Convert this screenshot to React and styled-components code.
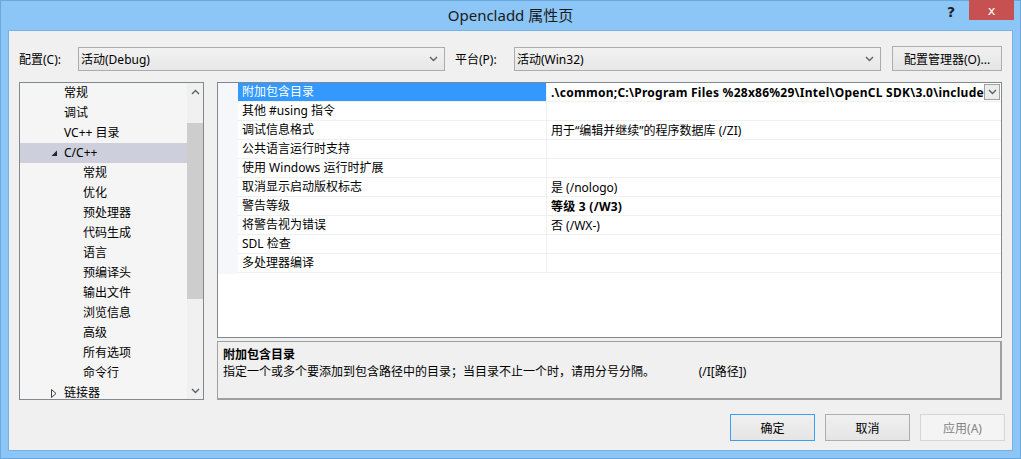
import React from 'react';
import styled, { createGlobalStyle } from 'styled-components';

const GlobalStyle = createGlobalStyle`
  html, body {
    margin: 0;
    padding: 0;
    background: #8bc6f7;
  }
  body {
    font-family: "Noto Sans", "Noto Sans CJK SC", sans-serif;
    font-size: 12px;
    color: #000;
  }
`;

const FONT = `"Noto Sans", "Noto Sans CJK SC", sans-serif`;

const Window = styled.div`
  width: 1021px;
  height: 459px;
  box-sizing: border-box;
  background: #8bc6f7;
  border: 1px solid #6aa7dc;
  display: flex;
  flex-direction: column;
`;

const TitleBar = styled.div`
  height: 29px;
  display: grid;
  grid-template-columns: 1fr auto 1fr;
  align-items: start;
`;

const Title = styled.div`
  grid-column: 2;
  font-size: 15px;
  line-height: 29px;
  color: #1a1a1a;
  font-family: "Noto Sans", "Noto Sans CJK SC", sans-serif;
`;

const Caption = styled.div`
  grid-column: 3;
  justify-self: end;
  display: flex;
  align-items: flex-start;
  margin-right: 6px;
`;

const HelpGlyph = styled.span`
  font-size: 14px;
  font-weight: bold;
  color: #222;
  line-height: 22px;
  margin-right: 14px;
  font-family: "DejaVu Sans", sans-serif;
`;

const CloseButton = styled.div`
  width: 45px;
  height: 20px;
  margin-top: -1px;
  background: #c75050;
  color: #fff;
  display: flex;
  align-items: center;
  justify-content: center;
  font-size: 13px;
  font-family: "DejaVu Sans", sans-serif;
`;

const Client = styled.div`
  flex: 1;
  margin: 0 7px 7px 7px;
  background: #f0f0f0;
  border: 1px solid #79b1e2;
  display: flex;
  flex-direction: column;
  padding: 15px 10px 0 10px;
`;

const ConfigRow = styled.div`
  display: flex;
  align-items: center;
  height: 25px;
`;

const Label = styled.span`
  width: ${(p) => p.width}px;
  font-family: ${FONT};
  white-space: nowrap;
`;

const Combo = styled.div`
  width: ${(p) => p.width}px;
  height: 24px;
  box-sizing: border-box;
  border: 1px solid #acacac;
  background: linear-gradient(#f2f2f2, #e7e7e7);
  display: flex;
  align-items: center;
  padding: 0 6px 0 2px;
  margin-right: ${(p) => p.gap || 0}px;
`;

const ComboText = styled.span`
  flex: 1;
`;

const Chevron = () => (
  <svg width="9" height="6" viewBox="0 0 9 6">
    <path d="M1 1 L4.5 4.5 L8 1" fill="none" stroke="#606060" strokeWidth="1.4" />
  </svg>
);

const PushButton = styled.div`
  width: ${(p) => p.width}px;
  height: ${(p) => p.height || 27}px;
  box-sizing: border-box;
  border: 1px solid ${(p) => (p.isDefault ? '#3c9ef0' : p.disabled ? '#d5d5d5' : '#adadad')};
  background: ${(p) => (p.disabled ? '#f4f4f4' : 'linear-gradient(#f0f0f0, #e5e5e5)')};
  color: ${(p) => (p.disabled ? '#838383' : '#000')};
  display: flex;
  align-items: center;
  justify-content: center;
  font-family: ${FONT};
`;

const Body = styled.div`
  display: flex;
  margin-top: 11px;
  gap: 13px;
`;

const Tree = styled.div`
  width: 185px;
  height: 318px;
  box-sizing: border-box;
  border: 1px solid #828790;
  background: #f5f5f5;
  display: flex;
  overflow: hidden;
`;

const TreeList = styled.div`
  flex: 1;
  display: flex;
  flex-direction: column;
`;

const TreeItem = styled.div`
  height: 20px;
  flex: none;
  display: flex;
  align-items: center;
  padding-left: ${(p) => p.indent}px;
  background: ${(p) => (p.selected ? '#cdcfdc' : 'transparent')};
  font-family: ${FONT};
  line-height: 20px;
  white-space: nowrap;
`;

const Expander = styled.span`
  width: 12px;
  display: inline-flex;
  align-items: center;
  margin-right: 1px;
`;

const ScrollBar = styled.div`
  width: 16px;
  background: #f0f0f0;
  display: flex;
  flex-direction: column;
  align-items: center;
`;

const ScrollArrow = styled.div`
  height: 17px;
  display: flex;
  align-items: center;
  justify-content: center;
`;

const ScrollTrack = styled.div`
  flex: 1;
  width: 16px;
  display: flex;
  flex-direction: column;
`;

const ScrollThumb = styled.div`
  margin-top: 23px;
  height: 176px;
  background: #cdcdcd;
`;

const RightCol = styled.div`
  display: flex;
  flex-direction: column;
  gap: 3px;
`;

const Grid = styled.div`
  width: 785px;
  height: 256px;
  box-sizing: border-box;
  border: 1px solid #828790;
  background: #fff;
  display: flex;
`;

const Gutter = styled.div`
  width: 20px;
  height: 191px;
  background: #f5f7fb;
`;

const Rows = styled.div`
  flex: 1;
  display: flex;
  flex-direction: column;
`;

const Row = styled.div`
  display: flex;
  height: 19px;
  box-sizing: border-box;
  border-bottom: 1px solid #f0f0f0;
`;

const NameCell = styled.div`
  width: 309px;
  box-sizing: border-box;
  border-right: 1px solid #f0f0f0;
  padding-left: 4px;
  line-height: 18px;
  background: ${(p) => (p.selected ? '#3399ff' : 'transparent')};
  color: ${(p) => (p.selected ? '#fff' : '#000')};
  font-family: ${FONT};
  white-space: nowrap;
`;

const ValueCell = styled.div`
  flex: 1;
  display: flex;
  align-items: center;
  padding-left: 4px;
  overflow: hidden;
  font-family: ${FONT};
  font-weight: ${(p) => (p.bold ? 'bold' : 'normal')};
  letter-spacing: ${(p) => (p.bold ? '0.25px' : 'normal')};
  white-space: nowrap;
`;

const ValueText = styled.span`
  flex: 1;
  overflow: hidden;
`;

const DropButton = styled.div`
  width: 16px;
  height: 16px;
  flex: none;
  box-sizing: border-box;
  border: 1px solid #a0a0a0;
  background: #ececec;
  display: flex;
  align-items: center;
  justify-content: center;
  margin-right: 1px;
`;

const Description = styled.div`
  width: 785px;
  height: 59px;
  box-sizing: border-box;
  border: 1px solid #a0a0a0;
  border-width: 1px 2px 2px 1px;
  padding: 4px 5px;
  display: flex;
  flex-direction: column;
  font-family: ${FONT};
`;

const DescTitle = styled.div`
  font-weight: bold;
  line-height: 17px;
`;

const DescText = styled.div`
  line-height: 17px;
  white-space: pre;
`;

const Footer = styled.div`
  display: flex;
  justify-content: flex-end;
  gap: 10px;
  margin-top: 14px;
  margin-right: -3px;
`;

const tree = [
  { label: '常规', indent: 44 },
  { label: '调试', indent: 44 },
  { label: 'VC++ 目录', indent: 44 },
  { label: 'C/C++', indent: 31, expander: 'open', selected: true },
  { label: '常规', indent: 63 },
  { label: '优化', indent: 63 },
  { label: '预处理器', indent: 63 },
  { label: '代码生成', indent: 63 },
  { label: '语言', indent: 63 },
  { label: '预编译头', indent: 63 },
  { label: '输出文件', indent: 63 },
  { label: '浏览信息', indent: 63 },
  { label: '高级', indent: 63 },
  { label: '所有选项', indent: 63 },
  { label: '命令行', indent: 63 },
  { label: '链接器', indent: 31, expander: 'closed' },
];

const props = [
  {
    name: '附加包含目录',
    value: '.\\common;C:\\Program Files %28x86%29\\Intel\\OpenCL SDK\\3.0\\include',
    bold: true,
    selected: true,
  },
  { name: '其他 #using 指令', value: '' },
  { name: '调试信息格式', value: '用于“编辑并继续”的程序数据库 (/ZI)' },
  { name: '公共语言运行时支持', value: '' },
  { name: '使用 Windows 运行时扩展', value: '' },
  { name: '取消显示启动版权标志', value: '是 (/nologo)' },
  { name: '警告等级', value: '等级 3 (/W3)', bold: true },
  { name: '将警告视为错误', value: '否 (/WX-)' },
  { name: 'SDL 检查', value: '' },
  { name: '多处理器编译', value: '' },
];

const ExpanderIcon = ({ open }) => (
  <Expander>
    {open ? (
      <svg width="7" height="7" viewBox="0 0 7 7">
        <path d="M6 0.5 L6 6 L0.5 6 Z" fill="#262626" />
      </svg>
    ) : (
      <svg width="6" height="9" viewBox="0 0 6 9">
        <path d="M0.5 0.5 L5 4.5 L0.5 8.5 Z" fill="none" stroke="#404040" strokeWidth="1" />
      </svg>
    )}
  </Expander>
);

const App = () => (
  <>
    <GlobalStyle />
    <Window>
      <TitleBar>
        <Title>Opencladd 属性页</Title>
        <Caption>
          <HelpGlyph>?</HelpGlyph>
          <CloseButton>x</CloseButton>
        </Caption>
      </TitleBar>
      <Client>
        <ConfigRow>
          <Label width={59}>配置(C):</Label>
          <Combo width={367} gap={10}>
            <ComboText>活动(Debug)</ComboText>
            <Chevron />
          </Combo>
          <Label width={59}>平台(P):</Label>
          <Combo width={367} gap={11}>
            <ComboText>活动(Win32)</ComboText>
            <Chevron />
          </Combo>
          <PushButton width={110} height={25}>配置管理器(O)...</PushButton>
        </ConfigRow>
        <Body>
          <Tree>
            <TreeList>
              {tree.map((t, i) => (
                <TreeItem key={i} indent={t.indent} selected={t.selected}>
                  {t.expander && <ExpanderIcon open={t.expander === 'open'} />}
                  {t.label}
                </TreeItem>
              ))}
            </TreeList>
            <ScrollBar>
              <ScrollArrow>
                <svg width="9" height="6" viewBox="0 0 9 6">
                  <path d="M1 5 L4.5 1.5 L8 5" fill="none" stroke="#606060" strokeWidth="1.4" />
                </svg>
              </ScrollArrow>
              <ScrollTrack>
                <ScrollThumb />
              </ScrollTrack>
              <ScrollArrow>
                <Chevron />
              </ScrollArrow>
            </ScrollBar>
          </Tree>
          <RightCol>
            <Grid>
              <Gutter />
              <Rows>
                {props.map((p, i) => (
                  <Row key={i}>
                    <NameCell selected={p.selected}>{p.name}</NameCell>
                    <ValueCell bold={p.bold}>
                      <ValueText>{p.value}</ValueText>
                      {i === 0 && (
                        <DropButton>
                          <Chevron />
                        </DropButton>
                      )}
                    </ValueCell>
                  </Row>
                ))}
              </Rows>
            </Grid>
            <Description>
              <DescTitle>附加包含目录</DescTitle>
              <DescText>{'指定一个或多个要添加到包含路径中的目录；当目录不止一个时，请用分号分隔。              (/I[路径])'}</DescText>
            </Description>
          </RightCol>
        </Body>
        <Footer>
          <PushButton width={85} isDefault>确定</PushButton>
          <PushButton width={85}>取消</PushButton>
          <PushButton width={85} disabled>应用(A)</PushButton>
        </Footer>
      </Client>
    </Window>
  </>
);

export default App;
